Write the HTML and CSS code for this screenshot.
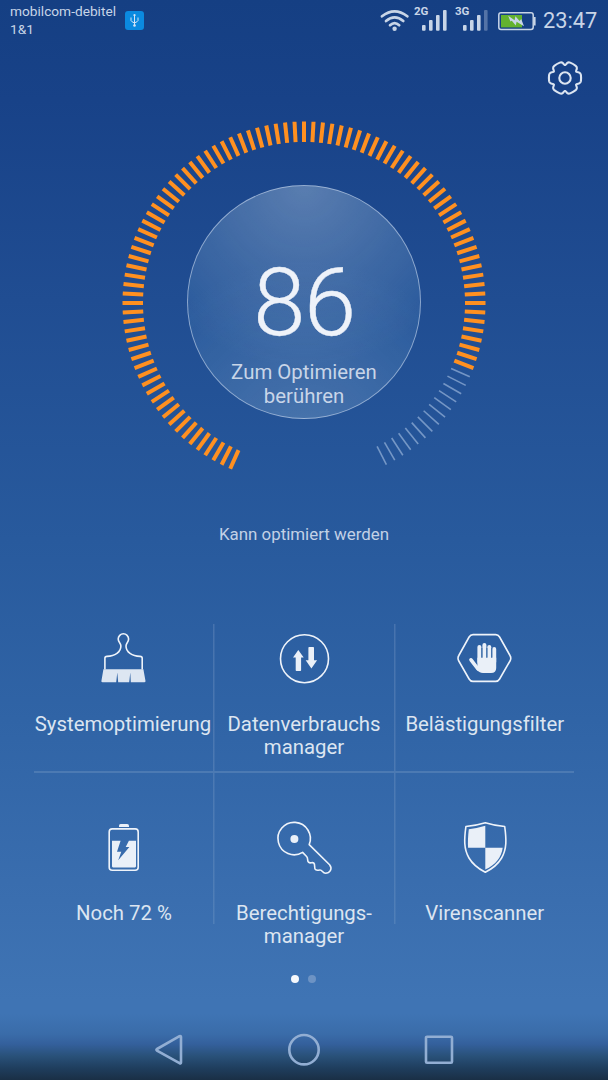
FILE: index.html
```html
<!DOCTYPE html>
<html lang="de">
<head>
    <meta charset="UTF-8">
    <meta name="viewport" content="width=device-width, initial-scale=1.0">
    <title>Telefonmanager</title>
    <link rel="stylesheet" href="styles.css">
</head>
<body>
    <header class="status-bar">
        <div class="carrier">mobilcom-debitel<br>1&amp;1</div>
        <svg class="usb" width="19" height="19" viewBox="0 0 19 19">
            <rect width="19" height="19" rx="3" fill="#0b8ae0"/>
            <path d="M9.5 4v10M6 6.5v3q0 1 3.5 2.5M13 6.5v3q0 1-3.5 2.5M8.5 4.5l1-1.5 1 1.5" fill="none" stroke="#d5e4f5" stroke-width="1"/>
            <circle cx="9.5" cy="14.5" r="1.3" fill="#d5e4f5"/>
        </svg>
        <div class="indicators">
            <svg class="wifi" width="30" height="24" viewBox="0 0 30 24">
                <g fill="none" stroke="#c8d5e7" stroke-width="2.7" stroke-linecap="round">
                    <path d="M2 8.3Q14.6-1.6 27.3 8.3"/>
                    <path d="M6 13Q14.6 5.6 23.3 13"/>
                    <path d="M10 17.2Q14.6 13 19.2 17.2"/>
                </g>
                <circle cx="14.6" cy="20.8" r="2.2" fill="#c8d5e7"/>
            </svg>
            <div class="signal">
                <span>2G</span>
                <svg width="25" height="21" viewBox="0 0 25 21" fill="#c8d5e7">
                    <rect x="0" y="15" width="3.6" height="5.7" rx="1"/>
                    <rect x="7" y="10" width="3.6" height="10.7" rx="1"/>
                    <rect x="14" y="5" width="3.6" height="15.7" rx="1"/>
                    <rect x="21" y="0" width="3.6" height="20.7" rx="1"/>
                </svg>
            </div>
            <div class="signal">
                <span>3G</span>
                <svg width="25" height="21" viewBox="0 0 25 21" fill="#c8d5e7">
                    <rect x="0" y="15" width="3.6" height="5.7" rx="1"/>
                    <rect x="7" y="10" width="3.6" height="10.7" rx="1"/>
                    <rect x="14" y="5" width="3.6" height="15.7" rx="1"/>
                    <rect x="21" y="0" width="3.6" height="20.7" rx="1" opacity=".35"/>
                </svg>
            </div>
            <svg class="battery" width="38" height="19" viewBox="0 0 38 19">
                <rect x=".8" y=".8" width="34.4" height="16.6" rx="2.2" fill="none" stroke="#c8d5e7" stroke-width="1.5"/>
                <rect x="35.8" y="5" width="1.8" height="8.5" fill="#c8d5e7"/>
                <rect x="3" y="3" width="21" height="12.4" fill="#63b22f"/>
                <path d="M10.2 3.8L16.6 8.2 17.4 4.2 21.6 9 23.2 7 26 14.2 18.6 9.8 17.8 13.4 13.8 8.8 12.4 9.6z" fill="#c8d5e7"/>
            </svg>
            <span class="clock">23:47</span>
        </div>
    </header>

    <div class="toolbar">
        <svg width="38" height="38" viewBox="-19 -19 38 38" fill="none" stroke="#dce5f1" stroke-width="2.1" stroke-linecap="round">
            <defs>
                <path id="tooth" d="M11.3-6.5C11.9-5.6 13-5.9 14-5.6Q15.6-5.1 15.9-3.2 16.3 0 15.9 3.2 15.6 5.1 14 5.6C13 5.9 11.9 5.6 11.3 6.5"/>
            </defs>
            <use href="#tooth"/>
            <use href="#tooth" transform="rotate(60)"/>
            <use href="#tooth" transform="rotate(120)"/>
            <use href="#tooth" transform="rotate(180)"/>
            <use href="#tooth" transform="rotate(240)"/>
            <use href="#tooth" transform="rotate(300)"/>
            <circle r="5.7"/>
        </svg>
    </div>

    <main>
        <section class="gauge">
            <svg class="ticks" id="ticks" width="364" height="364" viewBox="-182 -182 364 364"></svg>
            <div class="dial">
                <div class="score">86</div>
                <div class="hint">Zum Optimieren<br>berühren</div>
            </div>
        </section>
        <p class="state">Kann optimiert werden</p>

        <section class="tools">
            <div class="tool">
                <svg width="64" height="64" viewBox="0 0 64 64">
                    <path class="line" d="M12.9 43.5V32.2Q12.9 30.4 15 30.4C23 30.4 28.9 26 28.9 20C28.9 17 26.2 16.5 26.2 13A5.2 5.2 0 0 1 36.6 13C36.6 16.5 34 17 34 20C34 26 40 30.4 48 30.4Q50.2 30.4 50.2 32.2V43.5"/>
                    <path class="fill dim" d="M11.4 43.3H51.4L53.5 55Q53.6 56.3 52.3 56.3H38.8L38.3 46.5 37.2 56.3H26.2L25.3 46.5 24.2 56.3H10.6Q9.2 56.3 9.4 55z"/>
                </svg>
                <span>Systemoptimierung</span>
            </div>
            <div class="tool">
                <svg width="64" height="64" viewBox="0 0 64 64">
                    <circle class="line" cx="32.5" cy="32.7" r="24"/>
                    <path class="fill" d="M26.3 24L31.7 31.5H29.1V44.2Q29.1 45 28.3 45H24.5Q23.7 45 23.7 44.2V31.5H21zM39.4 42.5L33.7 34.3H36.4V21.8Q36.4 21 37.2 21H41.2Q42 21 42 21.8V34.3H45.1z"/>
                </svg>
                <span>Datenverbrauchs<br>manager</span>
            </div>
            <div class="tool">
                <svg width="64" height="64" viewBox="0 0 64 64">
                    <path class="line" d="M21 8.6H43.7Q46.2 8.6 47.6 11L58 29.5Q59.6 32.2 58 35L47.6 53Q46.2 55.4 43.7 55.4H21Q18.5 55.4 17.1 53L6.8 35Q5.2 32.2 6.8 29.5L17.1 11Q18.5 8.6 21 8.6z"/>
                    <g fill="none" stroke="#eaf0f8" stroke-width="4" stroke-linecap="round">
                        <path d="M27.4 21V36M32.4 19V36M37.3 21V36M42.2 23V36"/>
                        <path d="M19 33.8L26 43" stroke-width="3.6"/>
                    </g>
                    <path class="fill" d="M25.4 31.7H44.2V42Q44.2 47 39 47H31Q27 47 24.7 43.6L22.5 40 25.4 40z"/>
                    <path d="M29.9 22V31.5M34.9 22V31.5M39.8 22V31.5" stroke="#2f63a4" stroke-width=".9"/>
                </svg>
                <span class="shift">Belästigungsfilter</span>
            </div>
            <div class="tool">
                <svg width="64" height="64" viewBox="0 0 64 64">
                    <rect class="line" x="17.2" y="13.9" width="29" height="41.3" rx="3"/>
                    <path class="fill" d="M27 12V10.5Q27 9 28.6 9H35.2Q37 9 37 10.5V12z"/>
                    <path class="fill" fill-rule="evenodd" d="M20 25.7H28.6L25 36.7H29.3L26.2 45.2 37.4 32H33.7L36.9 25.7H44V51.3Q44 52.4 43 52.4H21Q20 52.4 20 51.3z"/>
                </svg>
                <span>Noch 72 %</span>
            </div>
            <div class="tool">
                <svg width="64" height="64" viewBox="0 0 64 64">
                    <path class="line" d="M37.2 29.6L57.6 49.7C61 54 57.5 58.2 53.5 58.2C50.5 58.2 50.5 55 48 55C46 55 45.5 56 43.5 54.7C41.7 53.5 43.7 49.5 41.7 48C40 46.7 38.5 49 36.5 47.2C34.8 45.5 36.5 43.5 34.6 41.5L30.6 37.4A16.2 16.2 0 1 1 37.2 29.6z"/>
                    <circle class="fill" cx="22.4" cy="23.9" r="4"/>
                </svg>
                <span>Berechtigungs-<br>manager</span>
            </div>
            <div class="tool">
                <svg width="64" height="64" viewBox="0 0 64 64">
                    <path class="line" d="M33.3 7.7Q24 10.6 13.9 11.5C12.2 24 11.6 34 17 43Q22 51.5 33.3 57.3Q44.6 51.5 49.6 43C55 34 54.4 24 52.7 11.5Q42.6 10.6 33.3 7.7z"/>
                    <path class="fill" d="M33.3 10.8V32.8H16.1Q15.5 25 16.8 14.2 25 13.4 33.3 10.8zM33.3 32.8H50.7C49.5 42.5 43.5 50 33.3 54.5z"/>
                </svg>
                <span class="shift">Virenscanner</span>
            </div>
        </section>

        <div class="pager">
            <i class="active"></i>
            <i></i>
        </div>
    </main>

    <nav class="nav-bar">
        <svg width="34" height="34" viewBox="0 0 34 34"><path d="M5 16L27.5 3.2Q29 2.5 29 4V29.4Q29 31 27.5 30.1L5 17.6Q3.8 16.8 5 16z"/></svg>
        <svg width="34" height="34" viewBox="0 0 34 34"><circle cx="17" cy="16.7" r="14.7"/></svg>
        <svg width="34" height="34" viewBox="0 0 34 34"><rect x="4" y="3.7" width="26" height="26" rx="1"/></svg>
    </nav>

    <script>
        // 104 marks, 3 degrees apart, starting at the lower left
        var ticks = document.getElementById('ticks');
        var active = 90;
        for (var i = 0; i < 104; i++) {
            var line = document.createElementNS('http://www.w3.org/2000/svg', 'line');
            line.setAttribute('x1', 161);
            line.setAttribute('x2', 181.5);
            line.setAttribute('transform', 'rotate(' + (114 + i * 3) + ')');
            line.setAttribute('class', i < active ? 'tick on' : 'tick');
            ticks.appendChild(line);
        }
    </script>
</body>
</html>
```
FILE: styles.css
```css
* {
    box-sizing: border-box;
}
body {
    margin: 0;
    width: 608px;
    height: 1080px;
    overflow: hidden;
    display: flex;
    flex-direction: column;
    font-family: Roboto, sans-serif;
    font-variant-ligatures: none;
    color: #dce5f1;
    background: linear-gradient(#153f83 0, #184288 100px, #204d92 300px, #285a9d 540px, #3064a6 720px, #3a6eaf 900px, #3f74b4 1000px, #3f74b4 1080px);
}
.status-bar {
    height: 42px;
    display: flex;
    align-items: flex-start;
    color: #c8d5e7;
}
.carrier {
    width: 107px;
    margin: 2px 0 0 10px;
    font-size: 13.7px;
    line-height: 18px;
    white-space: nowrap;
}
.usb {
    margin: 11px 0 0 8px;
}
.indicators {
    display: flex;
    align-items: flex-start;
    margin-left: auto;
    padding-right: 10px;
}
.wifi {
    margin-top: 8px;
}
.signal {
    display: flex;
    width: 33px;
    margin: 5px 0 0 4px;
}
.signal + .signal {
    margin-left: 8px;
}
.signal span {
    width: 8px;
    font-size: 11.5px;
    font-weight: 700;
    line-height: 13px;
}
.signal svg {
    margin-top: 5px;
    flex: none;
}
.battery {
    margin: 12px 7px 0 10px;
}
.clock {
    width: 55px;
    font-size: 21.8px;
    line-height: 26px;
    margin-top: 8px;
    white-space: nowrap;
}
.toolbar {
    height: 79px;
    display: flex;
    justify-content: flex-end;
    padding: 17px 24.5px 0 0;
}
main {
    display: flex;
    flex-direction: column;
    align-items: center;
}
.gauge {
    display: grid;
    width: 364px;
    height: 364px;
    margin-right: 1px;
    justify-items: center;
    align-items: center;
}
.ticks, .dial {
    grid-area: 1 / 1;
}
.tick {
    stroke: rgba(170, 195, 228, 0.6);
    stroke-width: 1.6;
}
.tick.on {
    stroke: #ff9020;
    stroke-width: 4;
}
.dial {
    width: 234px;
    height: 234px;
    margin-bottom: 2px;
    margin-left: 1px;
    border-radius: 50%;
    border: 1px solid rgba(190, 208, 232, 0.65);
    background:
        radial-gradient(circle at 50% 0, rgba(255, 255, 255, 0.24), rgba(255, 255, 255, 0) 70%),
        radial-gradient(circle at 50% 110%, rgba(255, 255, 255, 0.14), rgba(255, 255, 255, 0) 65%),
        rgba(80, 140, 195, 0.2);
    text-align: center;
}
.score {
    margin-top: 61px;
    font-size: 94px;
    font-weight: 300;
    line-height: 112px;
    letter-spacing: -1.5px;
    color: #eef2f9;
    -webkit-text-stroke: 0.4px #eef2f9;
}
.hint {
    margin-top: 1px;
    font-size: 20.4px;
    line-height: 24px;
    color: #c8d5e8;
}
.state {
    margin: 39px 0 0;
    font-size: 16.9px;
    line-height: 20px;
    color: #c2d1e6;
}
.tools {
    width: 540px;
    margin-top: 39px;
    display: grid;
    grid-template-columns: repeat(3, 180px);
    grid-template-rows: repeat(2, 189px);
    background:
        linear-gradient(#4c7ab3, #4c7ab3) 0 188px / 540px 2px no-repeat,
        linear-gradient(#4773ae, #507fb8) 179px 41px / 1.5px 300px no-repeat,
        linear-gradient(#4773ae, #507fb8) 360px 41px / 1.5px 300px no-repeat;
}
.tool {
    display: flex;
    flex-direction: column;
    align-items: center;
    padding-top: 43px;
    font-size: 20.35px;
    line-height: 23px;
    text-align: center;
    white-space: nowrap;
}
.tool svg {
    margin-bottom: 23px;
}
.tool:first-child span {
    margin-right: 2px;
}
.shift {
    margin-left: 1.5px;
}
.line {
    fill: none;
    stroke: #eef3fa;
    stroke-width: 1.6;
    stroke-linejoin: round;
}
.fill {
    fill: #eaf0f8;
}
.fill.dim {
    fill: #dde6f2;
}
.pager {
    display: flex;
    gap: 9px;
    margin-top: 14px;
    margin-right: 1px;
}
.pager i {
    width: 8px;
    height: 8px;
    border-radius: 50%;
    background-color: #6d93c4;
}
.pager .active {
    background-color: #f5f8fc;
}
.nav-bar {
    height: 66px;
    margin-top: auto;
    padding-top: 19px;
    display: flex;
    justify-content: center;
    gap: 101px;
    background: linear-gradient(#3f74b4 0, #3a6ca9 20px, #34609c 30px, #295179 42px, #1f3e5e 54px, #1a2f45 66px);
}
.nav-bar svg {
    fill: none;
    stroke: #92aed3;
    stroke-width: 2.6;
}
```
